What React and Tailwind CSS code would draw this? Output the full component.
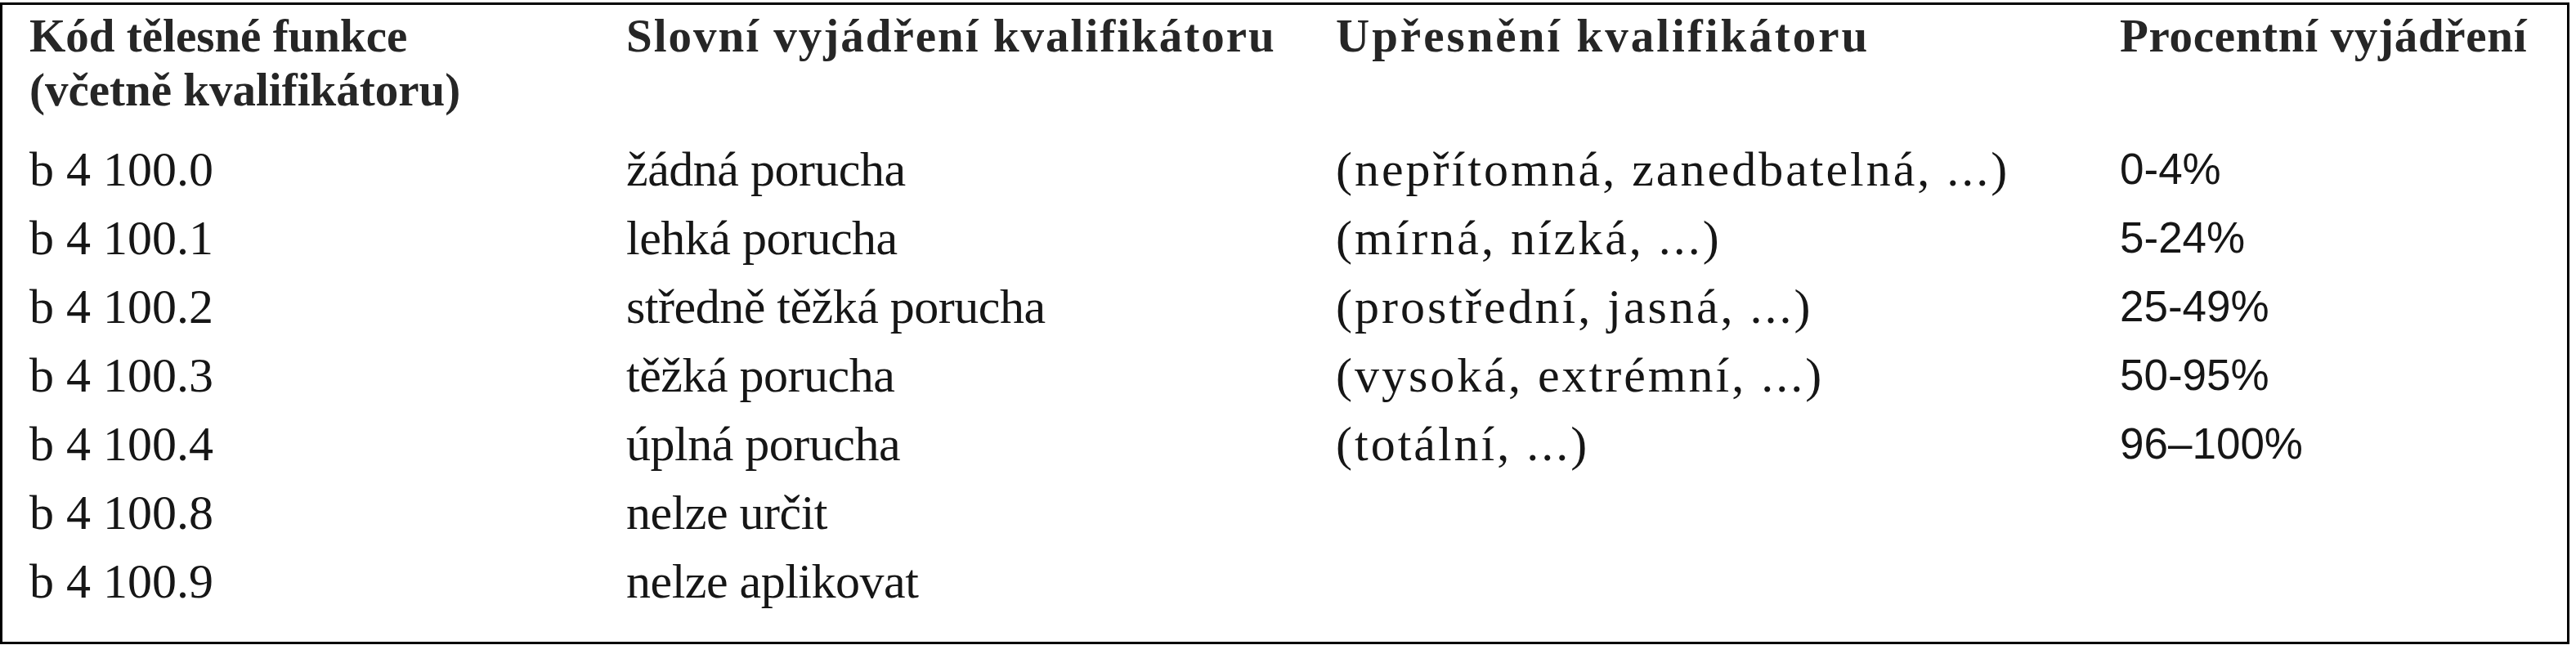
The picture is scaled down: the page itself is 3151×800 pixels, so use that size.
import React from "react";

const rows = [
  ["b 4 100.0", "žádná porucha", "(nepřítomná, zanedbatelná, ...)", "0-4%"],
  ["b 4 100.1", "lehká porucha", "(mírná, nízká, ...)", "5-24%"],
  ["b 4 100.2", "středně těžká porucha", "(prostřední, jasná, ...)", "25-49%"],
  ["b 4 100.3", "těžká porucha", "(vysoká, extrémní, ...)", "50-95%"],
  ["b 4 100.4", "úplná porucha", "(totální, ...)", "96–100%"],
  ["b 4 100.8", "nelze určit", "", ""],
  ["b 4 100.9", "nelze aplikovat", "", ""],
];

const serif = "font-['Liberation_Serif','Times_New_Roman',serif]";
const sans = "font-['Liberation_Sans',Arial,sans-serif]";

export default function App() {
  return (
    <div className="w-[3151px] h-[800px] bg-white pt-[3px]">
      <div className={`w-[3143px] h-[785px] border-[3px] border-black text-[#161616] ${serif} pl-[33px] pt-[5px]`}>
        {/* header */}
        <div className="grid grid-cols-[730px_868px_959px_1fr] text-[57px] leading-[66px] font-bold text-[#262626] whitespace-nowrap">
          <div>
            <div>Kód tělesné funkce</div>
            <div>(včetně kvalifikátoru)</div>
          </div>
          <div className="tracking-[2px]">Slovní vyjádření kvalifikátoru</div>
          <div className="tracking-[3px]">Upřesnění kvalifikátoru</div>
          <div className="tracking-[0.7px]">Procentní vyjádření</div>
        </div>

        {/* body */}
        <div className="mt-[22px]">
          {rows.map((r) => (
            <div key={r[0]} className="grid grid-cols-[730px_868px_959px_1fr] text-[60px] leading-[84px] whitespace-nowrap">
              <div>{r[0]}</div>
              <div className="tracking-[-0.5px]">{r[1]}</div>
              <div className="tracking-[3px]">{r[2]}</div>
              <div className={`${sans} text-[53px]`}>{r[3]}</div>
            </div>
          ))}
        </div>
      </div>
    </div>
  );
}
